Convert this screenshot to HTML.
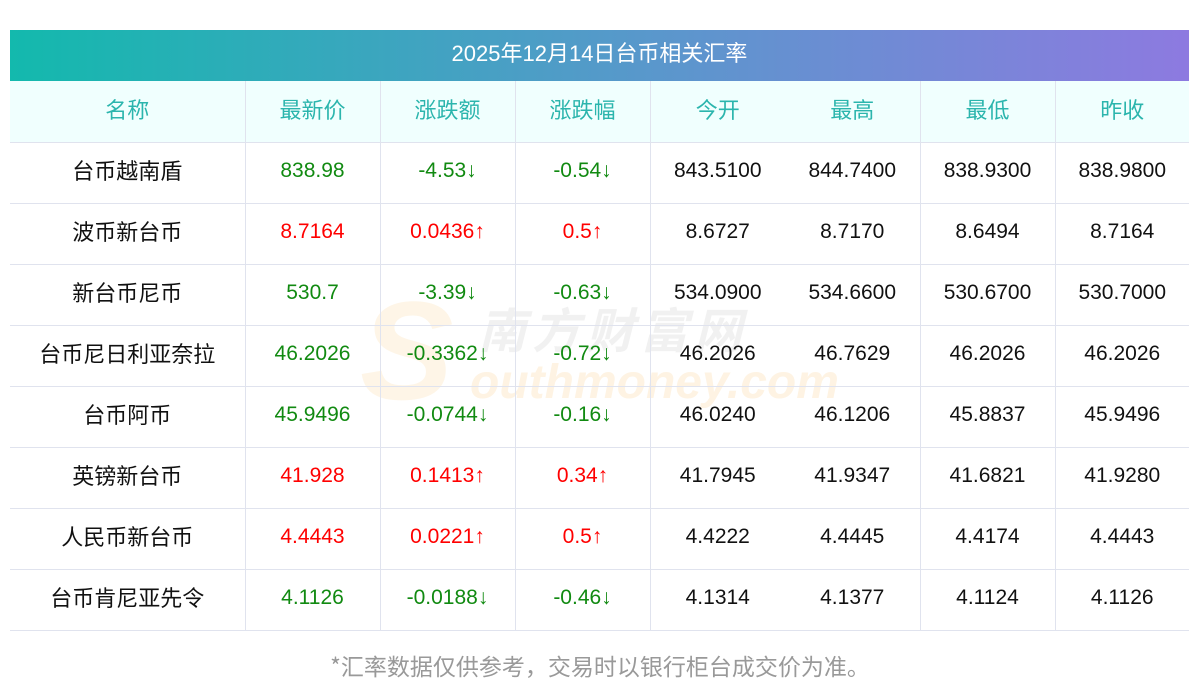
<!DOCTYPE html>
<html><head><meta charset="utf-8"><style>
body{margin:0;background:#fff;width:1200px;height:697px;overflow:hidden;position:relative;font-family:"Liberation Sans","Noto Sans CJK SC",sans-serif}
.bar{position:absolute;left:10px;top:30px;width:1179px;height:51px;background:linear-gradient(90deg,#13b9ad,#5a97cc 55%,#8d7ae0);color:#fff;font-size:22px;line-height:48px;text-align:center}
table{position:absolute;left:10px;top:81px;width:1179px;border-collapse:collapse;table-layout:fixed}
td{height:61px;border-bottom:1px solid #e0e3ee;text-align:center;font-size:21px;color:#111;padding:0 0 3px 0;line-height:24px;box-sizing:border-box}
td.c,tr.h td{font-family:"Noto Sans CJK SC",sans-serif;font-size:22px;padding:0 0 5px 0}
tr.h td{background:#f0fffe;color:#2bb5ad;height:61px}
.bl{border-left:1px solid #e0e3ee}
.g{color:#118a11}.r{color:#f00}
.foot{position:absolute;top:648px;width:1200px;text-align:center;color:#999;font-size:23px;font-family:"Noto Sans CJK SC",sans-serif;line-height:34px}
.wm{position:absolute;color:rgba(120,120,120,.1);font-weight:bold;font-style:italic}
</style></head><body>
<div class="bar">2025年12月14日台币相关汇率</div>
<div class="wm" style="left:478px;top:292px;font-size:48px;letter-spacing:6px;font-family:'Noto Sans CJK SC',sans-serif">南方财富网</div>
<div class="wm" style="left:360px;top:270px;font-size:140px;color:rgba(250,170,60,.12)">S</div>
<div class="wm" style="left:470px;top:355px;font-size:48px;color:rgba(250,170,60,.14)">outhmoney.com</div>
<table>
<colgroup><col style="width:235px"><col style="width:135px"><col style="width:135px"><col style="width:135px"><col style="width:135px"><col style="width:135px"><col style="width:135px"><col style="width:134px"></colgroup>
<tr class="h"><td>名称</td><td class="bl">最新价</td><td class="bl">涨跌额</td><td class="bl">涨跌幅</td><td class="bl">今开</td><td>最高</td><td class="bl">最低</td><td class="bl">昨收</td></tr>
<tr><td class="c">台币越南盾</td><td class="bl g">838.98</td><td class="bl g">-4.53↓</td><td class="bl g">-0.54↓</td><td class="bl">843.5100</td><td>844.7400</td><td class="bl">838.9300</td><td class="bl">838.9800</td></tr>
<tr><td class="c">波币新台币</td><td class="bl r">8.7164</td><td class="bl r">0.0436↑</td><td class="bl r">0.5↑</td><td class="bl">8.6727</td><td>8.7170</td><td class="bl">8.6494</td><td class="bl">8.7164</td></tr>
<tr><td class="c">新台币尼币</td><td class="bl g">530.7</td><td class="bl g">-3.39↓</td><td class="bl g">-0.63↓</td><td class="bl">534.0900</td><td>534.6600</td><td class="bl">530.6700</td><td class="bl">530.7000</td></tr>
<tr><td class="c">台币尼日利亚奈拉</td><td class="bl g">46.2026</td><td class="bl g">-0.3362↓</td><td class="bl g">-0.72↓</td><td class="bl">46.2026</td><td>46.7629</td><td class="bl">46.2026</td><td class="bl">46.2026</td></tr>
<tr><td class="c">台币阿币</td><td class="bl g">45.9496</td><td class="bl g">-0.0744↓</td><td class="bl g">-0.16↓</td><td class="bl">46.0240</td><td>46.1206</td><td class="bl">45.8837</td><td class="bl">45.9496</td></tr>
<tr><td class="c">英镑新台币</td><td class="bl r">41.928</td><td class="bl r">0.1413↑</td><td class="bl r">0.34↑</td><td class="bl">41.7945</td><td>41.9347</td><td class="bl">41.6821</td><td class="bl">41.9280</td></tr>
<tr><td class="c">人民币新台币</td><td class="bl r">4.4443</td><td class="bl r">0.0221↑</td><td class="bl r">0.5↑</td><td class="bl">4.4222</td><td>4.4445</td><td class="bl">4.4174</td><td class="bl">4.4443</td></tr>
<tr><td class="c">台币肯尼亚先令</td><td class="bl g">4.1126</td><td class="bl g">-0.0188↓</td><td class="bl g">-0.46↓</td><td class="bl">4.1314</td><td>4.1377</td><td class="bl">4.1124</td><td class="bl">4.1126</td></tr>
</table>
<div class="foot">*汇率数据仅供参考，交易时以银行柜台成交价为准。</div>
</body></html>
